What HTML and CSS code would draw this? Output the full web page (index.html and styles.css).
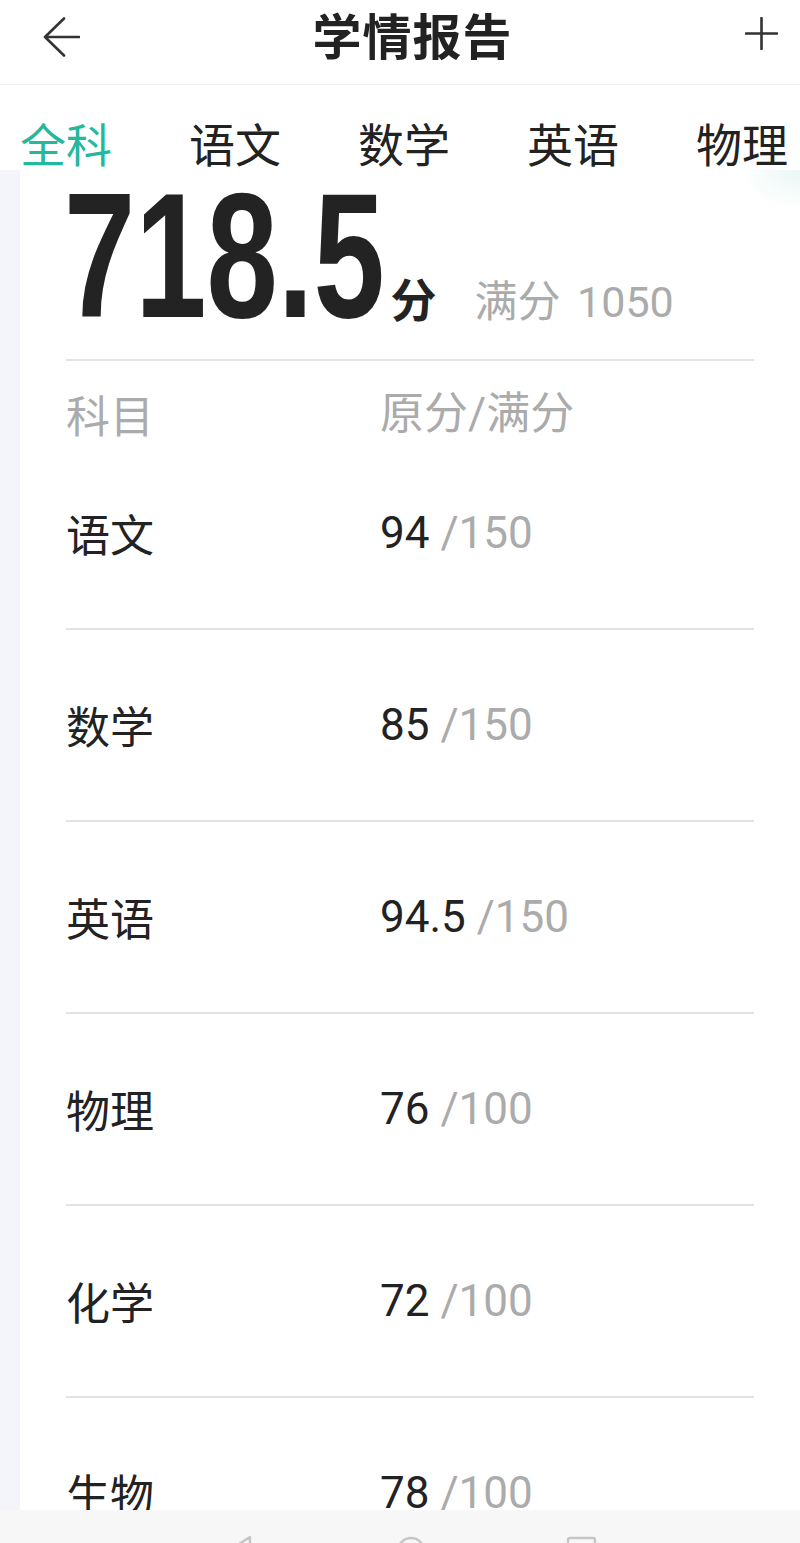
FILE: index.html
```html
<!DOCTYPE html>
<html lang="zh-CN">
<head>
<meta charset="utf-8">
<title>学情报告</title>
<link rel="stylesheet" href="styles.css">
</head>
<body>
<div class="page">
  <header class="topbar">
    <svg class="back" width="37" height="40" viewBox="0 0 37 40" aria-hidden="true">
      <path d="M21 1.5 L2 20 L21 38.5 M2 20 H36" fill="none" stroke="#333" stroke-width="2.6" stroke-linecap="round" stroke-linejoin="round"/>
    </svg>
    <h1 class="title">学情报告</h1>
    <svg class="plus" width="33" height="33" viewBox="0 0 33 33" aria-hidden="true">
      <path d="M16.5 1 V32 M1 16.5 H32" fill="none" stroke="#333" stroke-width="2.6" stroke-linecap="round"/>
    </svg>
  </header>
  <nav class="tabs">
    <span class="tab active">全科</span>
    <span class="tab">语文</span>
    <span class="tab">数学</span>
    <span class="tab">英语</span>
    <span class="tab">物理</span>
  </nav>
  <main class="content">
    <section class="card">
      <div class="hero">
        <span class="total">718.5</span><span class="unit">分</span><span class="full">满分 1050</span>
      </div>
      <div class="row head"><span class="subj">科目</span><span class="score">原分/满分</span></div>
      <div class="row"><span class="subj">语文</span><span class="score"><span class="got">94</span> <span class="max">/150</span></span></div>
      <div class="row"><span class="subj">数学</span><span class="score"><span class="got">85</span> <span class="max">/150</span></span></div>
      <div class="row"><span class="subj">英语</span><span class="score"><span class="got">94.5</span> <span class="max">/150</span></span></div>
      <div class="row"><span class="subj">物理</span><span class="score"><span class="got">76</span> <span class="max">/100</span></span></div>
      <div class="row"><span class="subj">化学</span><span class="score"><span class="got">72</span> <span class="max">/100</span></span></div>
      <div class="row"><span class="subj">生物</span><span class="score"><span class="got">78</span> <span class="max">/100</span></span></div>
    </section>
  </main>
  <footer class="navbar">
    <svg class="nav-ico" width="420" height="33" viewBox="0 0 420 33" aria-hidden="true">
      <path d="M50 27 L28 41 L50 55 Z" fill="none" stroke="#c6c6c6" stroke-width="2.4" stroke-linejoin="round"/>
      <circle cx="211" cy="41" r="13" fill="none" stroke="#c6c6c6" stroke-width="2.4"/>
      <rect x="368" y="28" width="27" height="27" rx="2" fill="none" stroke="#c6c6c6" stroke-width="2.4"/>
    </svg>
  </footer>
</div>
</body>
</html>
```

FILE: styles.css
```css
* { box-sizing: border-box; }
html, body { margin: 0; padding: 0; }
body {
  background: #f4f5fa;
  font-family: "Roboto", "Noto Sans CJK SC", sans-serif;
  color: #222;
}
.page {
  width: 800px;
  height: 1543px;
  overflow: hidden;
  position: relative;
  background: #f4f5fa;
}
.topbar {
  height: 85px;
  background: #fff;
  border-bottom: 1px solid #ededed;
  display: flex;
  align-items: flex-start;
  justify-content: space-between;
  padding: 0 22px 0 43px;
}
.back { margin-top: 17px; display: block; }
.plus { margin-top: 17px; display: block; }
.title {
  margin: 0;
  margin-top: 2px;
  font-family: "Noto Sans CJK SC", sans-serif;
  font-weight: 700;
  font-size: 49px;
  line-height: 64px;
  color: #222;
  letter-spacing: 1px;
}
.tabs {
  height: 85px;
  background: #fff;
  display: flex;
  gap: 77px;
  padding-left: 20px;
  align-items: flex-end;
}
.tab {
  font-family: "Noto Sans CJK SC", sans-serif;
  font-size: 46px;
  line-height: 62px;
  color: #222;
  margin-bottom: -3px;
}
.tab.active { color: #26b89f; }
.content {
  padding-left: 20px;
}
.card {
  background: #fff;
  padding: 0 46px;
  background-image: radial-gradient(ellipse 60px 40px at 100% 0, #eaf6f5 0, #ffffff 100%);
}
.hero {
  display: flex;
  align-items: baseline;
  border-bottom: 2px solid #e3e3e5;
  padding-bottom: 17px;
}
.total {
  display: inline-block;
  font-family: "Liberation Sans", sans-serif;
  font-weight: 700;
  font-size: 178px;
  line-height: 172px;
  color: #232323;
  transform: scaleX(0.72);
  transform-origin: 0 50%;
  margin-left: -2px;
  margin-right: -125px;
}
.unit {
  font-family: "Noto Sans CJK SC", sans-serif;
  font-weight: 700;
  font-size: 46px;
  margin-left: 6px;
  color: #232323;
}
.full {
  font-size: 43px;
  color: #ababab;
  margin-left: 38px;
  word-spacing: 6px;
}
.row {
  display: flex;
  align-items: center;
  height: 192px;
  border-bottom: 2px solid #e3e3e5;
  font-size: 44px;
}
.row.head {
  height: 77px;
  border-bottom: none;
  color: #ababab;
  align-items: flex-start;
  padding-top: 23px;
}
.subj {
  width: 314px;
  font-family: "Noto Sans CJK SC", sans-serif;
  line-height: 60px;
}
.score { line-height: 60px; }
.got { color: #222; }
.max { color: #ababab; }
.navbar {
  position: absolute;
  left: 0;
  bottom: 0;
  width: 800px;
  height: 33px;
  background: #f7f7f7;
  padding-left: 200px;
}
.nav-ico { display: block; }
```
